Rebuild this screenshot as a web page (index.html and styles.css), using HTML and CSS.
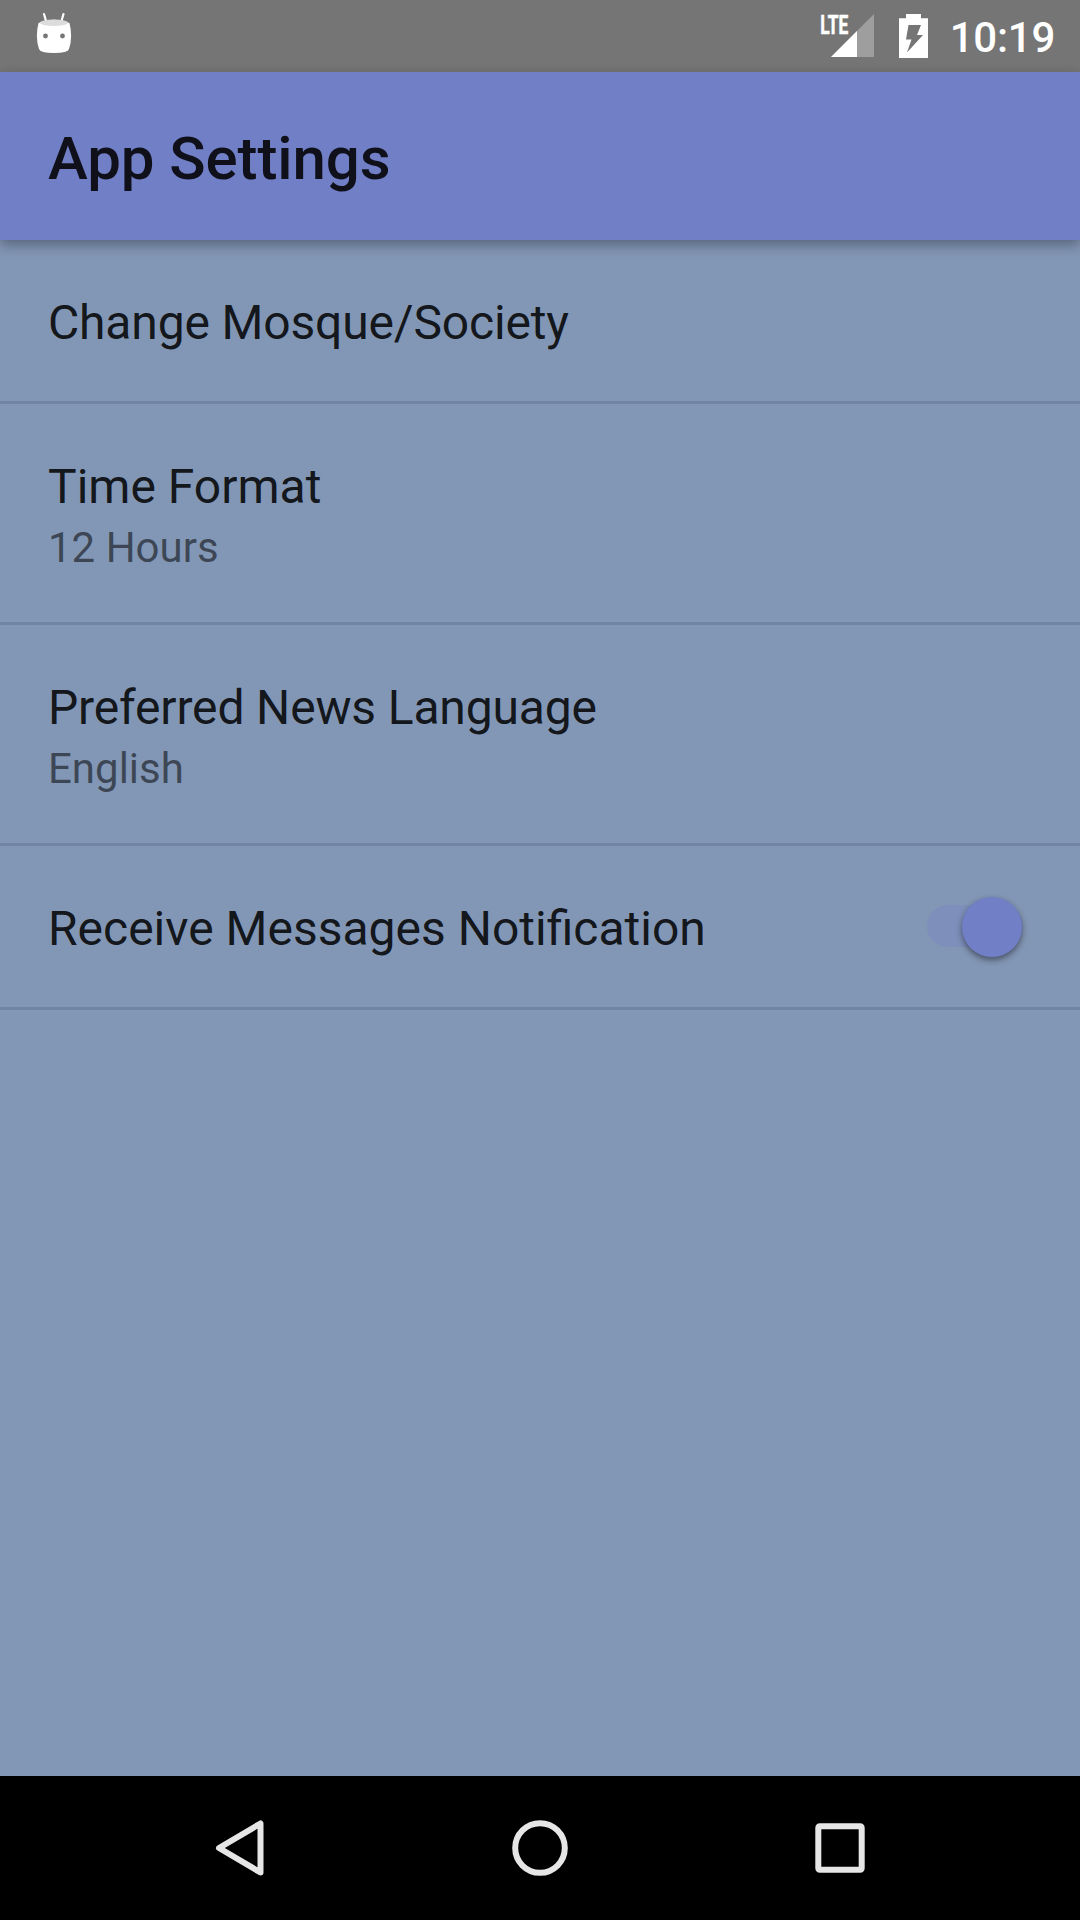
FILE: index.html
```html
<!DOCTYPE html>
<html lang="en">
<head>
<meta charset="utf-8">
<title>App Settings</title>
<link rel="stylesheet" href="styles.css">
</head>
<body>
<div class="screen">
  <header class="status-bar">
    <svg class="droid" width="36" height="44" viewBox="36 11 36 44">
      <path d="M44 14l2 7M63.500 14l-2 7" stroke="#fff" stroke-width="2.2" stroke-linecap="round"/>
      <path d="M38.500 23Q54 16.500 69.500 23Q73 37 69 49Q68 53 54 53Q40 53 39 49Q35 37 38.500 23z" fill="#fff"/>
      <ellipse cx="54" cy="22.800" rx="14" ry="3.200" fill="#dcdcdc"/>
      <circle cx="45.500" cy="36" r="2.400" fill="#757575"/>
      <circle cx="62.500" cy="36" r="2.400" fill="#757575"/>
    </svg>
    <div class="status-icons">
      <svg class="signal" width="64" height="52" viewBox="812 8 64 52">
        <path d="M874 14V57H831z" fill="#9e9e9e"/>
        <path d="M857 31V57H831z" fill="#fff"/>
        <text class="lte" x="820.300" y="33.700" textLength="28" lengthAdjust="spacingAndGlyphs">LTE</text>
      </svg>
      <svg class="battery" width="29" height="44" viewBox="899 14 29 44">
        <path d="M906 14H921V18.300H928V58H899V18.300H906z" fill="#fff"/>
        <path d="M908.500 25H921L917 35H923L907 52.500L911.500 39.500H906z" fill="#757575"/>
      </svg>
      <span class="clock">10:19</span>
    </div>
  </header>
  <div class="app-bar"><h1 class="title">App Settings</h1></div>
  <main class="settings">
    <section class="row"><div class="name name-tight">Change Mosque/Society</div></section>
    <section class="row"><div class="name">Time Format</div><div class="summary">12 Hours</div></section>
    <section class="row"><div class="name name-tight">Preferred News Language</div><div class="summary">English</div></section>
    <section class="row row-switch">
      <div class="name">Receive Messages Notification</div>
      <div class="switch"><div class="thumb"></div></div>
    </section>
  </main>
  <nav class="nav-bar">
    <svg width="60" height="60" viewBox="210 1818 60 60"><path d="M260.500 1823.500V1872.500L219 1848z"/></svg>
    <svg width="60" height="60" viewBox="510 1818 60 60"><circle cx="540" cy="1848" r="24.800"/></svg>
    <svg width="60" height="60" viewBox="810 1818 60 60"><rect x="818.300" y="1826.300" width="43.400" height="43.400" rx="1.500"/></svg>
  </nav>
</div>
</body>
</html>
```
FILE: styles.css
```css
* { box-sizing: border-box; }
body { margin: 0; font-family: Roboto, sans-serif; }
.screen {
  width: 1080px;
  height: 1920px;
  display: flex;
  flex-direction: column;
  background: #8296b5;
  overflow: hidden;
}
.status-bar {
  height: 72px;
  flex: none;
  display: flex;
  justify-content: space-between;
  align-items: flex-start;
  padding: 0 25px 0 36px;
  background: #757575;
}
.droid { margin-top: 11px; }
.status-icons { display: flex; align-items: flex-start; }
.signal { margin: 8px 23px 0 0; }
.battery { margin: 14px 22px 0 0; }
.lte {
  font-size: 26.7px;
  font-weight: 700;
  fill: #fff;
  stroke: #fff;
  stroke-width: .6px;
}
.clock {
  margin-top: 13px;
  font-size: 42px;
  line-height: 50px;
  font-weight: 500;
  letter-spacing: -.25px;
  color: #fff;
}
.app-bar {
  height: 168px;
  flex: none;
  padding: 51px 48px 0;
  background: #717fc7;
  box-shadow: 0 5px 12px rgba(0, 0, 0, .32);
  position: relative;
}
.title {
  margin: 0;
  font-size: 60px;
  line-height: 72px;
  font-weight: 500;
  letter-spacing: -.09px;
  color: rgba(0, 0, 0, .87);
}
.settings { flex: 1; }
.row {
  padding: 50px 48px 46px;
  border-bottom: 3px solid #7284a4;
}
.name {
  font-size: 48px;
  line-height: 65px;
  color: rgba(0, 0, 0, .87);
}
.name-tight { letter-spacing: -.16px; }
.summary {
  font-size: 42px;
  line-height: 57px;
  color: rgba(0, 0, 0, .54);
}
.row-switch {
  display: flex;
  justify-content: space-between;
}
.switch {
  width: 96px;
  height: 42px;
  margin: 9px 9px 0 0;
  padding: 1px 0 0 35px;
  display: flex;
  align-items: center;
  border-radius: 21px;
  background: #7d8fba;
}
.thumb {
  width: 60px;
  height: 60px;
  flex: none;
  border-radius: 50%;
  background: #717fc7;
  box-shadow: 0 3px 6px rgba(0, 0, 0, .45);
}
.nav-bar {
  height: 144px;
  flex: none;
  display: flex;
  justify-content: center;
  align-items: center;
  gap: 240px;
  background: #000;
}
.nav-bar svg {
  fill: none;
  stroke: #e6e6e6;
  stroke-width: 6;
  stroke-linejoin: round;
}
```
